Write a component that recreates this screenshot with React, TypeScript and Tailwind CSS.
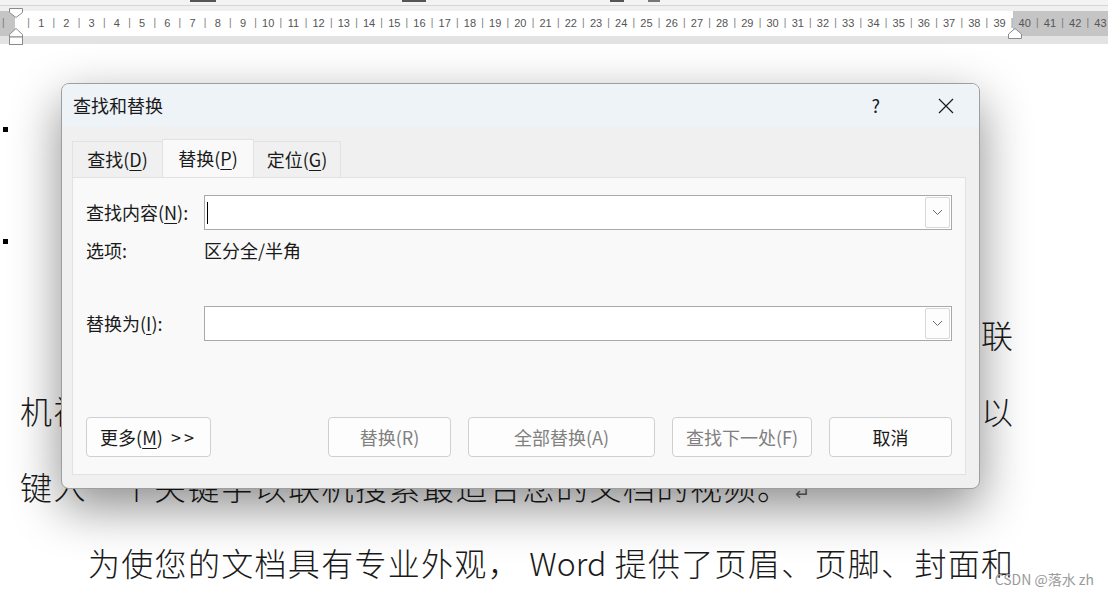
import React from "react";

function buildTicks() {
  const items: string[] = ["|", ""];
  for (let n = 1; n <= 43; n++) {
    items.push("|");
    items.push(String(n));
  }
  items.push("|");
  return items;
}

const ticks = buildTicks();

function Ruler() {
  return (
    <div className="relative">
      <div className="relative h-[6px] overflow-hidden border-b border-[#d6d6d6] bg-[#f3f3f3]">
        <div className="absolute left-[190px] top-0 h-[2px] w-[26px] bg-[#555]" />
        <div className="absolute left-[402px] top-0 h-[2px] w-[24px] bg-[#555]" />
        <div className="absolute left-[610px] top-0 h-[2px] w-[14px] bg-[#555]" />
        <div className="absolute left-[648px] top-0 h-[2px] w-[12px] bg-[#777]" />
      </div>
      <div className="h-[5px] bg-[#f0f0f0]" />
      <div className="flex h-[25px] items-center overflow-hidden bg-[linear-gradient(to_right,#c5c5c5_15px,#ffffff_15px,#ffffff_1013px,#c5c5c5_1013px)] font-['Liberation_Sans',sans-serif] text-[11px] text-[#555]">
        <div className="ml-[-2.93px] flex">
          {ticks.map((t, i) => (
            <span
              key={i}
              className={
                t === "|"
                  ? "flex w-[12.62px] flex-none justify-center text-[10px] text-[#777]"
                  : "flex w-[12.62px] flex-none justify-center whitespace-nowrap"
              }
            >
              {t}
            </span>
          ))}
        </div>
      </div>
      <div className="h-[8px] bg-[#e3e3e3]" />
      {/* indent markers */}
      <svg className="absolute left-[9px] top-[8px]" width="14" height="38" viewBox="0 0 14 38">
        <path d="M0.5 0.5h13v4l-6.5 5-6.5-5z" fill="#fff" stroke="#8a8a8a" />
        <path d="M7 20.5l6.5 6v2.5h-13v-2.5z" fill="#fff" stroke="#8a8a8a" />
        <rect x="0.5" y="29" width="13" height="7.5" fill="#fff" stroke="#8a8a8a" />
      </svg>
      <svg className="absolute left-[1008px] top-[28px]" width="14" height="11" viewBox="0 0 14 11">
        <path d="M7 0.5l6.5 5.5v4.5h-13v-4.5z" fill="#fff" stroke="#8a8a8a" />
      </svg>
    </div>
  );
}

function Chevron() {
  return (
    <div className="mr-[1px] flex h-[31px] w-[25px] items-center justify-center rounded-[2px] border border-[#d8d8d8] bg-[#fdfdfd]">
      <svg width="11" height="7" viewBox="0 0 11 7">
        <path d="M1 1l4.5 4.5L10 1" fill="none" stroke="#6a6a6a" strokeWidth="1" />
      </svg>
    </div>
  );
}

function ComboInput({ caret }: { caret?: boolean }) {
  return (
    <div className="flex h-[35px] w-[749px] items-center border border-[#a9a9a9] bg-white">
      <div className="flex-1 pl-[2px]">
        {caret && <div className="h-[22px] w-[1px] bg-black" />}
      </div>
      <Chevron />
    </div>
  );
}

function Btn({
  children,
  w,
  disabled,
}: {
  children: React.ReactNode;
  w: string;
  disabled?: boolean;
}) {
  return (
    <button
      type="button"
      className={`flex h-[40px] ${w} items-center justify-center rounded-[4px] border border-[#d0d0d0] bg-[#fdfdfd] text-[18px] ${
        disabled ? "text-[#808080]" : "text-[#1a1a1a]"
      }`}
    >
      {children}
    </button>
  );
}

function U({ children }: { children: React.ReactNode }) {
  return <span className="underline decoration-1 underline-offset-[3px]">{children}</span>;
}

function Dialog() {
  return (
    <div className="absolute left-[61px] top-[83px] h-[406px] w-[919px] overflow-hidden rounded-[8px] border border-[#9e9e9e] bg-[#f0f0f0] font-['Noto_Sans_CJK_SC',sans-serif] text-[#1a1a1a] shadow-[0_18px_50px_rgba(0,0,0,0.45)]">
      <div className="flex h-[43px] items-center bg-[#eef3f8] pl-[11px] text-[18px]">
        <span>查找和替换</span>
        <span className="ml-auto mr-[58px] text-[18px]">?</span>
        <svg className="mr-[25px]" width="16" height="16" viewBox="0 0 16 16">
          <path d="M1 1l14 14M15 1L1 15" stroke="#1a1a1a" strokeWidth="1.2" />
        </svg>
      </div>

      <div className="px-[10px] pt-[12px]">
        <div className="flex items-end text-[18px]">
          <div className="flex h-[36px] w-[90px] items-center justify-center border-l border-t border-[#e2e2e2]">
            查找(<U>D</U>)
          </div>
          <div className="flex h-[38px] w-[92px] items-center justify-center border-x border-t border-[#e2e2e2] bg-[#f9f9f9]">
            替换(<U>P</U>)
          </div>
          <div className="flex h-[36px] w-[87px] items-center justify-center border-r border-t border-[#e2e2e2]">
            定位(<U>G</U>)
          </div>
        </div>

        <div className="h-[298px] w-[894px] border border-[#e2e2e2] bg-[#f9f9f9] px-[13px] pt-[17px] text-[18px]">
          <div className="flex items-center">
            <span className="w-[118px]">
              查找内容(<U>N</U>):
            </span>
            <ComboInput caret />
          </div>
          <div className="mt-[10px] flex h-[20px] items-center">
            <span className="w-[118px]">选项:</span>
            <span>区分全/半角</span>
          </div>
          <div className="mt-[46px] flex items-center">
            <span className="w-[118px]">
              替换为(<U>I</U>):
            </span>
            <ComboInput />
          </div>

          <div className="mt-[76px] flex items-center justify-between">
            <Btn w="w-[125px]">
              更多(<U>M</U>)<span className="ml-[8px] tracking-[3px]">&gt;&gt;</span>
            </Btn>
            <div className="flex gap-[17px]">
              <Btn w="w-[123px]" disabled>
                替换(R)
              </Btn>
              <Btn w="w-[187px]" disabled>
                全部替换(A)
              </Btn>
              <Btn w="w-[140px]" disabled>
                查找下一处(F)
              </Btn>
              <Btn w="w-[123px]">取消</Btn>
            </div>
          </div>
        </div>
      </div>
    </div>
  );
}

function Page() {
  const line =
    "h-[76px] font-['Noto_Sans_CJK_SC',sans-serif] font-light text-[32px] leading-[76px] whitespace-nowrap text-[#1a1a1a]";
  return (
    <div className="overflow-hidden">
      <div className="ml-[3px] mt-[83px] h-[5px] w-[5px] bg-black" />
      <div className="ml-[3px] mt-[107px] h-[5px] w-[5px] bg-black" />
      <div
        className={`${line} ml-[88px] mt-[52px] w-[925px] overflow-hidden text-justify [text-align-last:justify]`}
      >
        视频提供了功能强大的方法帮助您证明您的观点。当您单击联
      </div>
      <div
        className={`${line} ml-[20px] w-[993px] overflow-hidden text-justify [text-align-last:justify]`}
      >
        机视频时，可以在想要添加的视频的嵌入代码中进行粘贴。您也可以
      </div>
      <div className={`${line} ml-[20px] tracking-[1.5px]`}>
        键入一个关键字以联机搜索最适合您的文档的视频。
        <span className="ml-[4px] text-[18px] leading-none text-[#666]">↵</span>
      </div>
      <div className={`${line} ml-[88px] w-[925px] text-justify [text-align-last:justify]`}>
        为使您的文档具有专业外观， Word 提供了页眉、页脚、封面和
      </div>
    </div>
  );
}

export default function App() {
  return (
    <div className="relative h-[599px] w-[1108px] overflow-hidden bg-white">
      <Ruler />
      <Page />
      <Dialog />
      <div className="absolute bottom-[9px] right-[14px] font-['Noto_Sans_CJK_SC',sans-serif] text-[14px] text-[#9a9a9a]">
        CSDN @落水 zh
      </div>
    </div>
  );
}
